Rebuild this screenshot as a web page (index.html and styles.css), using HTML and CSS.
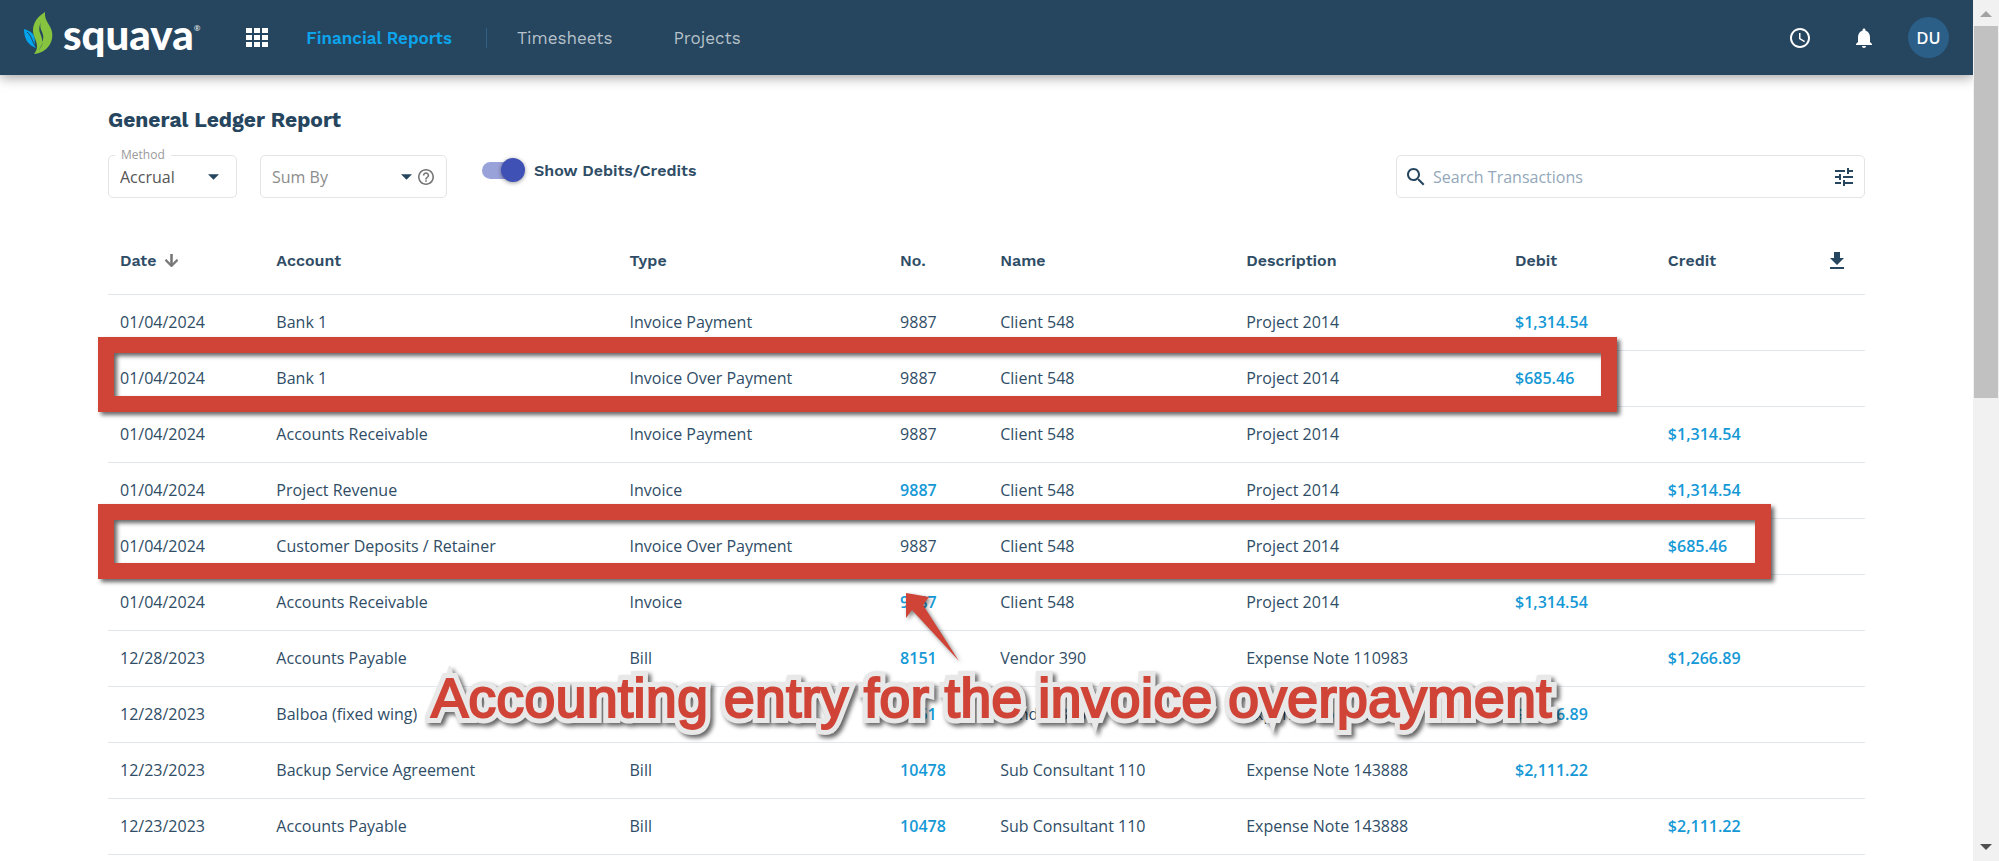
FILE: index.html
```html
<!DOCTYPE html>
<html lang="en">
<head>
    <meta charset="UTF-8">
    <meta name="viewport" content="width=device-width, initial-scale=1.0">
    <title>General Ledger Report - Squava</title>
    <link rel="stylesheet" href="styles.css">
</head>
<body>
    <div class="app">
        <header class="topbar">
            <a href="#" class="logo" aria-label="squava">
                <svg width="30" height="44" viewBox="0 0 30 44">
                    <path d="M0 17 C0 27 4 33 12 36 C9 31 13 26 8 21 C6 19 3 18 0 17 Z" fill="#00a4ec"/>
                    <path d="M21 0 C11 6 7 15 10 24 C13 31 15 36 10 42 C22 41 30 31 28 20 C27 13 20 9 21 0 Z" fill="#86c440"/>
                    <path d="M17 10 C14 18 21 20 19 28 C18 34 15 38 13 40 C19 34 19 31 18 27 C17 21 13 19 17 10 Z" fill="#26455e"/>
                    <path d="M3 20 C8 24 8 30 12 35" fill="none" stroke="#26455e" stroke-width="1"/>
                </svg>
                <span class="logo-text">squava</span><span class="logo-mark">®</span>
            </a>
            <button class="icon-button apps" aria-label="Apps">
                <svg width="22" height="20" viewBox="0 0 22 20" fill="#fff">
                    <path d="M0 0h6v5H0zM8 0h6v5H8zM16 0h6v5h-6zM0 7h6v5H0zM8 7h6v5H8zM16 7h6v5h-6zM0 14h6v5H0zM8 14h6v5H8zM16 14h6v5h-6z"/>
                </svg>
            </button>
            <nav class="nav">
                <a href="#" class="active">Financial Reports</a>
                <a href="#">Timesheets</a>
                <a href="#">Projects</a>
            </nav>
            <div class="topbar-right">
                <button class="icon-button" aria-label="Timer">
                    <svg width="24" height="24" viewBox="0 0 24 24" fill="#fff">
                        <path d="M11.99 2C6.47 2 2 6.48 2 12s4.47 10 9.99 10C17.52 22 22 17.52 22 12S17.52 2 11.99 2zM12 20c-4.42 0-8-3.58-8-8s3.58-8 8-8 8 3.58 8 8-3.58 8-8 8zm.5-13H11v6l5.25 3.15.75-1.23-4.5-2.67z"/>
                    </svg>
                </button>
                <button class="icon-button" aria-label="Notifications">
                    <svg width="24" height="24" viewBox="0 0 24 24" fill="#fff">
                        <path d="M12 22c1.1 0 2-.9 2-2h-4c0 1.1.89 2 2 2zm6-6v-5c0-3.07-1.64-5.64-4.5-6.32V4c0-.83-.67-1.5-1.5-1.5s-1.5.67-1.5 1.5v.68C7.63 5.36 6 7.92 6 11v5l-2 2v1h16v-1l-2-2z"/>
                    </svg>
                </button>
                <button class="avatar">DU</button>
            </div>
        </header>

        <main class="content">
            <h1>General Ledger Report</h1>
            <div class="filters">
                <div class="field method">
                    <label for="method">Method</label>
                    <select id="method">
                        <option>Accrual</option>
                        <option>Cash</option>
                    </select>
                    <svg class="caret" width="11" height="6" viewBox="0 0 12 6"><path d="M0 0h12L6 6z" fill="#26455e"/></svg>
                </div>
                <div class="field sum-by">
                    <select id="sumBy" aria-label="Sum By">
                        <option>Sum By</option>
                    </select>
                    <svg class="caret" width="11" height="6" viewBox="0 0 12 6"><path d="M0 0h12L6 6z" fill="#26455e"/></svg>
                    <button class="icon-button help" aria-label="Help">
                        <svg width="16" height="16" viewBox="2 2 20 20" fill="#757575">
                            <path d="M11 18h2v-2h-2v2zm1-16C6.48 2 2 6.48 2 12s4.48 10 10 10 10-4.48 10-10S17.52 2 12 2zm0 18c-4.41 0-8-3.59-8-8s3.59-8 8-8 8 3.59 8 8-3.59 8-8 8zm0-14c-2.21 0-4 1.79-4 4h2c0-1.1.9-2 2-2s2 .9 2 2c0 2-3 1.75-3 5h2c0-2.25 3-2.5 3-5 0-2.21-1.79-4-4-4z"/>
                        </svg>
                    </button>
                </div>
                <label class="switch">
                    <input type="checkbox" checked>
                    <span>Show Debits/Credits</span>
                </label>
                <div class="search">
                    <svg width="24" height="24" viewBox="0 0 24 24" fill="#26455e">
                        <path d="M15.5 14h-.79l-.28-.27C15.41 12.59 16 11.11 16 9.5 16 5.91 13.09 3 9.5 3S3 5.91 3 9.5 5.91 16 9.5 16c1.61 0 3.09-.59 4.23-1.57l.27.28v.79l5 4.99L20.49 19l-4.99-5zm-6 0C7.01 14 5 11.99 5 9.5S7.01 5 9.5 5 14 7.01 14 9.5 11.99 14 9.5 14z"/>
                    </svg>
                    <input type="text" placeholder="Search Transactions" aria-label="Search Transactions">
                    <button class="icon-button" aria-label="Filter">
                        <svg width="24" height="24" viewBox="0 0 24 24" fill="#26455e">
                            <path d="M3 17v2h6v-2H3zM3 5v2h10V5H3zm10 16v-2h8v-2h-8v-2h-2v6h2zM7 9v2H3v2h4v2h2V9H7zm14 4v-2H11v2h10zm-6-4h2V7h4V5h-4V3h-2v6z"/>
                        </svg>
                    </button>
                </div>
            </div>

            <div class="ledger">
                <table>
                    <colgroup>
                        <col class="col-date">
                        <col class="col-account">
                        <col class="col-type">
                        <col class="col-no">
                        <col class="col-name">
                        <col class="col-description">
                        <col class="col-debit">
                        <col class="col-credit">
                        <col class="col-download">
                    </colgroup>
                    <thead>
                        <tr>
                            <th>Date
                                <svg class="sort" width="13" height="13" viewBox="4 4 16 16" fill="#757575" stroke="#757575"><path d="M20 12l-1.41-1.41L13 16.17V4h-2v12.17l-5.58-5.59L4 12l8 8 8-8z"/></svg>
                            </th>
                            <th>Account</th>
                            <th>Type</th>
                            <th>No.</th>
                            <th>Name</th>
                            <th>Description</th>
                            <th>Debit</th>
                            <th>Credit</th>
                            <th>
                                <button class="icon-button download" aria-label="Download">
                                    <svg width="24" height="24" viewBox="0 0 24 24" fill="#26455e"><path d="M19 9h-4V3H9v6H5l7 7 7-7zM5 18v2h14v-2H5z"/></svg>
                                </button>
                            </th>
                        </tr>
                    </thead>
                    <tbody>
                        <tr><td>01/04/2024</td><td>Bank 1</td><td>Invoice Payment</td><td>9887</td><td>Client 548</td><td>Project 2014</td><td><a href="#">$1,314.54</a></td><td></td><td></td></tr>
                        <tr><td>01/04/2024</td><td>Bank 1</td><td>Invoice Over Payment</td><td>9887</td><td>Client 548</td><td>Project 2014</td><td><a href="#">$685.46</a></td><td></td><td></td></tr>
                        <tr><td>01/04/2024</td><td>Accounts Receivable</td><td>Invoice Payment</td><td>9887</td><td>Client 548</td><td>Project 2014</td><td></td><td><a href="#">$1,314.54</a></td><td></td></tr>
                        <tr><td>01/04/2024</td><td>Project Revenue</td><td>Invoice</td><td><a href="#">9887</a></td><td>Client 548</td><td>Project 2014</td><td></td><td><a href="#">$1,314.54</a></td><td></td></tr>
                        <tr><td>01/04/2024</td><td>Customer Deposits / Retainer</td><td>Invoice Over Payment</td><td>9887</td><td>Client 548</td><td>Project 2014</td><td></td><td><a href="#">$685.46</a></td><td></td></tr>
                        <tr><td>01/04/2024</td><td>Accounts Receivable</td><td>Invoice</td><td><a href="#">9887</a></td><td>Client 548</td><td>Project 2014</td><td><a href="#">$1,314.54</a></td><td></td><td></td></tr>
                        <tr><td>12/28/2023</td><td>Accounts Payable</td><td>Bill</td><td><a href="#">8151</a></td><td>Vendor 390</td><td>Expense Note 110983</td><td></td><td><a href="#">$1,266.89</a></td><td></td></tr>
                        <tr><td>12/28/2023</td><td>Balboa (fixed wing)</td><td>Bill</td><td><a href="#">8151</a></td><td>Vendor 390</td><td>Expense Note 110983</td><td><a href="#">$1,266.89</a></td><td></td><td></td></tr>
                        <tr><td>12/23/2023</td><td>Backup Service Agreement</td><td>Bill</td><td><a href="#">10478</a></td><td>Sub Consultant 110</td><td>Expense Note 143888</td><td><a href="#">$2,111.22</a></td><td></td><td></td></tr>
                        <tr><td>12/23/2023</td><td>Accounts Payable</td><td>Bill</td><td><a href="#">10478</a></td><td>Sub Consultant 110</td><td>Expense Note 143888</td><td></td><td><a href="#">$2,111.22</a></td><td></td></tr>
                    </tbody>
                </table>

                <!-- Annotations over the ledger -->
                <div class="callout callout-debit"></div>
                <div class="callout callout-credit"></div>
                <svg class="callout-arrow" width="54" height="70" viewBox="0 0 54 70">
                    <path d="M0 0 L23 4 L17 12 L53 68 L6 17 L0 25 Z" fill="#d04437"/>
                </svg>
                <p class="callout-text" data-text="Accounting entry for the invoice overpayment">Accounting entry for the invoice overpayment</p>
            </div>
        </main>
    </div>

    <div class="scrollbar">
        <svg width="26" height="26" viewBox="0 0 26 26"><path d="M7 17h12l-6-6z" fill="#a3a3a3"/></svg>
        <div class="scroll-track"><div class="scroll-thumb"></div></div>
        <svg width="26" height="26" viewBox="0 0 26 26"><path d="M7 9h12l-6 6z" fill="#505050"/></svg>
    </div>
</body>
</html>
```
FILE: styles.css
```css
* {
    box-sizing: border-box;
}
body {
    margin: 0;
    height: 100vh;
    display: flex;
    overflow: hidden;
    font-family: "Open Sans", sans-serif;
    font-size: 16px;
    color: #2f4d66;
    background-color: #fff;
}
a {
    color: #1599d6;
    text-decoration: none;
}
.app {
    flex: 1;
    min-width: 0;
    overflow: hidden;
}
.icon-button {
    display: flex;
    padding: 0;
    border: none;
    background: none;
    cursor: pointer;
}

/* Top bar */
.topbar {
    display: flex;
    align-items: center;
    height: 75px;
    padding: 0 24px;
    background-color: #26455e;
    box-shadow: 0 2px 12px rgba(0,0,0,0.4);
}
.logo {
    display: flex;
    align-items: center;
    color: #fff;
}
.logo svg {
    margin-bottom: 8px;
}
.logo-text {
    margin-left: 9px;
    font-family: Lato, sans-serif;
    font-size: 42px;
    font-weight: 900;
    line-height: 60px;
    padding-bottom: 8px;
}
.logo-mark {
    margin-bottom: 20px;
    font-size: 8px;
}
.apps {
    margin-left: 46px;
}
.nav {
    display: flex;
    align-items: center;
    margin-left: 38px;
    font-family: "Work Sans", Inter, sans-serif;
    font-size: 17px;
}
.nav a {
    margin-right: 61px;
    color: #b5c1cb;
}
.nav a.active {
    margin-right: 30px;
    padding-right: 34px;
    border-right: 1px solid #2f6186;
    color: #0ca4eb;
    font-weight: 600;
}
.topbar-right {
    display: flex;
    align-items: center;
    gap: 40px;
    margin-left: auto;
}
.avatar {
    width: 41px;
    height: 41px;
    margin-left: -8px;
    padding: 0;
    border: none;
    border-radius: 50%;
    background-color: #2c5f88;
    color: #fff;
    font-family: "Work Sans", Inter, sans-serif;
    font-size: 17px;
    font-weight: 500;
}

/* Report header */
.content {
    padding: 32px 108px 0;
}
h1 {
    margin: 0;
    color: #26455e;
    font-family: "Work Sans", Inter, sans-serif;
    font-size: 21px;
    font-weight: 700;
    line-height: 26px;
}
.filters {
    display: flex;
    align-items: center;
    margin-top: 22px;
}
.field {
    position: relative;
    display: flex;
    align-items: center;
    height: 43px;
    border: 1px solid #e4e4e4;
    border-radius: 5px;
}
.field label {
    position: absolute;
    top: -10px;
    left: 6px;
    padding: 0 6px;
    background-color: #fff;
    color: #9a9a9a;
    font-size: 12px;
    line-height: 18px;
}
.field select {
    width: 100%;
    height: 100%;
    padding: 0 11px;
    border: none;
    appearance: none;
    background: none;
    color: #555;
    font: inherit;
}
.method {
    width: 129px;
}
.sum-by {
    width: 187px;
    margin-left: 23px;
}
.sum-by select {
    color: #8c8c8c;
}
.caret {
    position: absolute;
    right: 17px;
    pointer-events: none;
}
.sum-by .caret {
    right: 34px;
}
.help {
    position: absolute;
    right: 12px;
}
.switch {
    display: flex;
    align-items: center;
    margin-left: 35px;
    padding-bottom: 12px;
    font-family: "Work Sans", Inter, sans-serif;
    font-weight: 600;
}
.switch input {
    position: relative;
    width: 42px;
    height: 17px;
    margin: 0 10px 0 0;
    appearance: none;
    border-radius: 9px;
    background-color: #9aa2da;
}
.switch input::before {
    content: "";
    position: absolute;
    top: -4px;
    right: -1px;
    width: 24px;
    height: 24px;
    border-radius: 50%;
    background-color: #3f51b5;
    box-shadow: 0 1px 4px rgba(0,0,0,0.4);
}
.search {
    display: flex;
    align-items: center;
    width: 469px;
    height: 43px;
    margin-left: auto;
    padding: 0 8px 0 7px;
    border: 1px solid #e4e4e4;
    border-radius: 5px;
}
.search input {
    flex: 1;
    padding: 0 5px;
    border: none;
    outline: none;
    color: #26455e;
    font: inherit;
}
.search input::placeholder {
    color: #93a8ba;
}

/* Ledger table */
.ledger {
    position: relative;
    margin-top: 30px;
}
table {
    width: 100%;
    table-layout: fixed;
    border-collapse: collapse;
}
th,
td {
    height: 56px;
    padding: 0 12px;
    border-bottom: 1px solid #dfe6ec;
    text-align: left;
    white-space: nowrap;
}
th {
    height: 66px;
    font-family: "Work Sans", Inter, sans-serif;
    font-weight: 600;
}
td a {
    font-weight: 600;
}
.sort {
    margin-left: 4px;
    vertical-align: -1px;
}
.download {
    margin-left: 4px;
}
.col-date { width: 8.9%; }
.col-account { width: 20.1%; }
.col-type { width: 15.4%; }
.col-no { width: 5.7%; }
.col-name { width: 14%; }
.col-description { width: 15.3%; }
.col-debit { width: 8.7%; }
.col-credit { width: 8.7%; }
.col-download { width: 3.2%; }

/* Annotations */
.callout {
    position: absolute;
    left: -10px;
    height: 75px;
    border: 16px solid #d04437;
    filter: drop-shadow(3px 3px 2px rgba(0,0,0,0.6));
    pointer-events: none;
}
.callout-debit {
    top: 109px;
    right: 248px;
}
.callout-credit {
    top: 276px;
    right: 94px;
}
.callout-arrow {
    position: absolute;
    top: 365px;
    left: 798px;
    overflow: visible;
    filter: drop-shadow(2px 2px 2px rgba(0,0,0,0.5));
}
.callout-text {
    position: absolute;
    top: 438px;
    left: 323px;
    margin: 0;
    color: #d04437;
    font-family: "Liberation Sans", Arial, sans-serif;
    font-size: 56px;
    line-height: 64px;
    white-space: nowrap;
    -webkit-text-stroke: 2px #d04437;
    filter: drop-shadow(3px 3px 2px rgba(0,0,0,0.6));
}
.callout-text::before {
    content: attr(data-text);
    position: absolute;
    top: 0;
    left: 0;
    z-index: -1;
    color: #e8e8e8;
    -webkit-text-stroke: 12px #e8e8e8;
    stroke-linejoin: round;
}

/* Scrollbar */
.scrollbar {
    display: flex;
    flex-direction: column;
    width: 26px;
    background-color: #f1f1f1;
}
.scroll-track {
    flex: 1;
    padding: 0 1px;
}
.scroll-thumb {
    height: 46%;
    background-color: #c1c1c1;
}
```
